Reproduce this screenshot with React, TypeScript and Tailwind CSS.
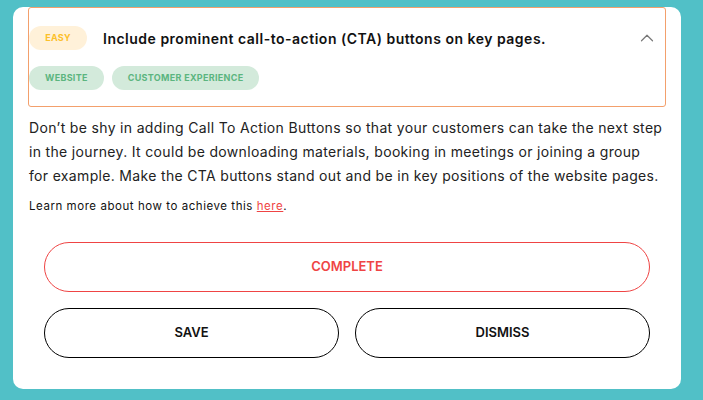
import { ChevronUp } from 'lucide-react'

const TAGS = ['Website', 'Customer Experience']

export default function App() {
  return (
    <div className="h-[400px] w-[703px] overflow-hidden bg-[#51c0c7] font-['Inter',sans-serif] text-[#1c1c1c]">
      <div className="ml-[13px] mt-[8px] h-[382px] w-[668px] rounded-[10px] bg-white px-[15px]">
        {/* Recommendation header */}
        <div className="-mt-px h-[100px] rounded-[3px] border border-[#f3a06c]">
          <div className="flex items-center pt-[18px]">
            <span className="flex h-[24px] w-[58px] items-center justify-center rounded-full bg-[#fff1d9] text-[9px] font-bold tracking-wide text-[#fcc02a]">
              EASY
            </span>
            <h2 className="ml-4 flex-1 text-[14px] font-semibold tracking-[0.5px] text-[#111]">
              Include prominent call-to-action (CTA) buttons on key pages.
            </h2>
            <ChevronUp className="mr-[7px] h-[22px] w-[22px] text-[#777]" strokeWidth={1.3} />
          </div>
          <div className="mt-4 flex gap-2">
            {TAGS.map((tag) => (
              <span
                key={tag}
                className="flex h-[24px] items-center rounded-full bg-[#d3eadb] px-4 text-[9px] font-bold uppercase tracking-[0.3px] text-[#5cb57f]"
              >
                {tag}
              </span>
            ))}
          </div>
        </div>

        <p className="mt-[9px] whitespace-nowrap pl-px text-[14px] leading-[24px] tracking-[0.33px] text-[#222]">
          Don’t be shy in adding Call To Action Buttons so that your customers can take the next step
          <br />
          in the journey. It could be downloading materials, booking in meetings or joining a group
          <br />
          for example. Make the CTA buttons stand out and be in key positions of the website pages.
        </p>
        <p className="mt-[10px] pl-px text-[11.5px] leading-4 tracking-[0.55px] text-[#111]">
          Learn more about how to achieve this{' '}
          <a href="#" className="text-[#ef4444] underline">
            here
          </a>
          .
        </p>

        {/* Actions */}
        <div className="mt-[28px] flex flex-col gap-4 px-4">
          <button className="h-[50px] w-full rounded-full border border-[#ef4444] text-[13px] font-semibold text-[#ef4444]">
            COMPLETE
          </button>
          <div className="flex gap-4">
            <button className="h-[50px] flex-1 rounded-full border border-black text-[13px] font-semibold text-[#111]">
              SAVE
            </button>
            <button className="h-[50px] flex-1 rounded-full border border-black text-[13px] font-semibold text-[#111]">
              DISMISS
            </button>
          </div>
        </div>
      </div>
    </div>
  )
}
